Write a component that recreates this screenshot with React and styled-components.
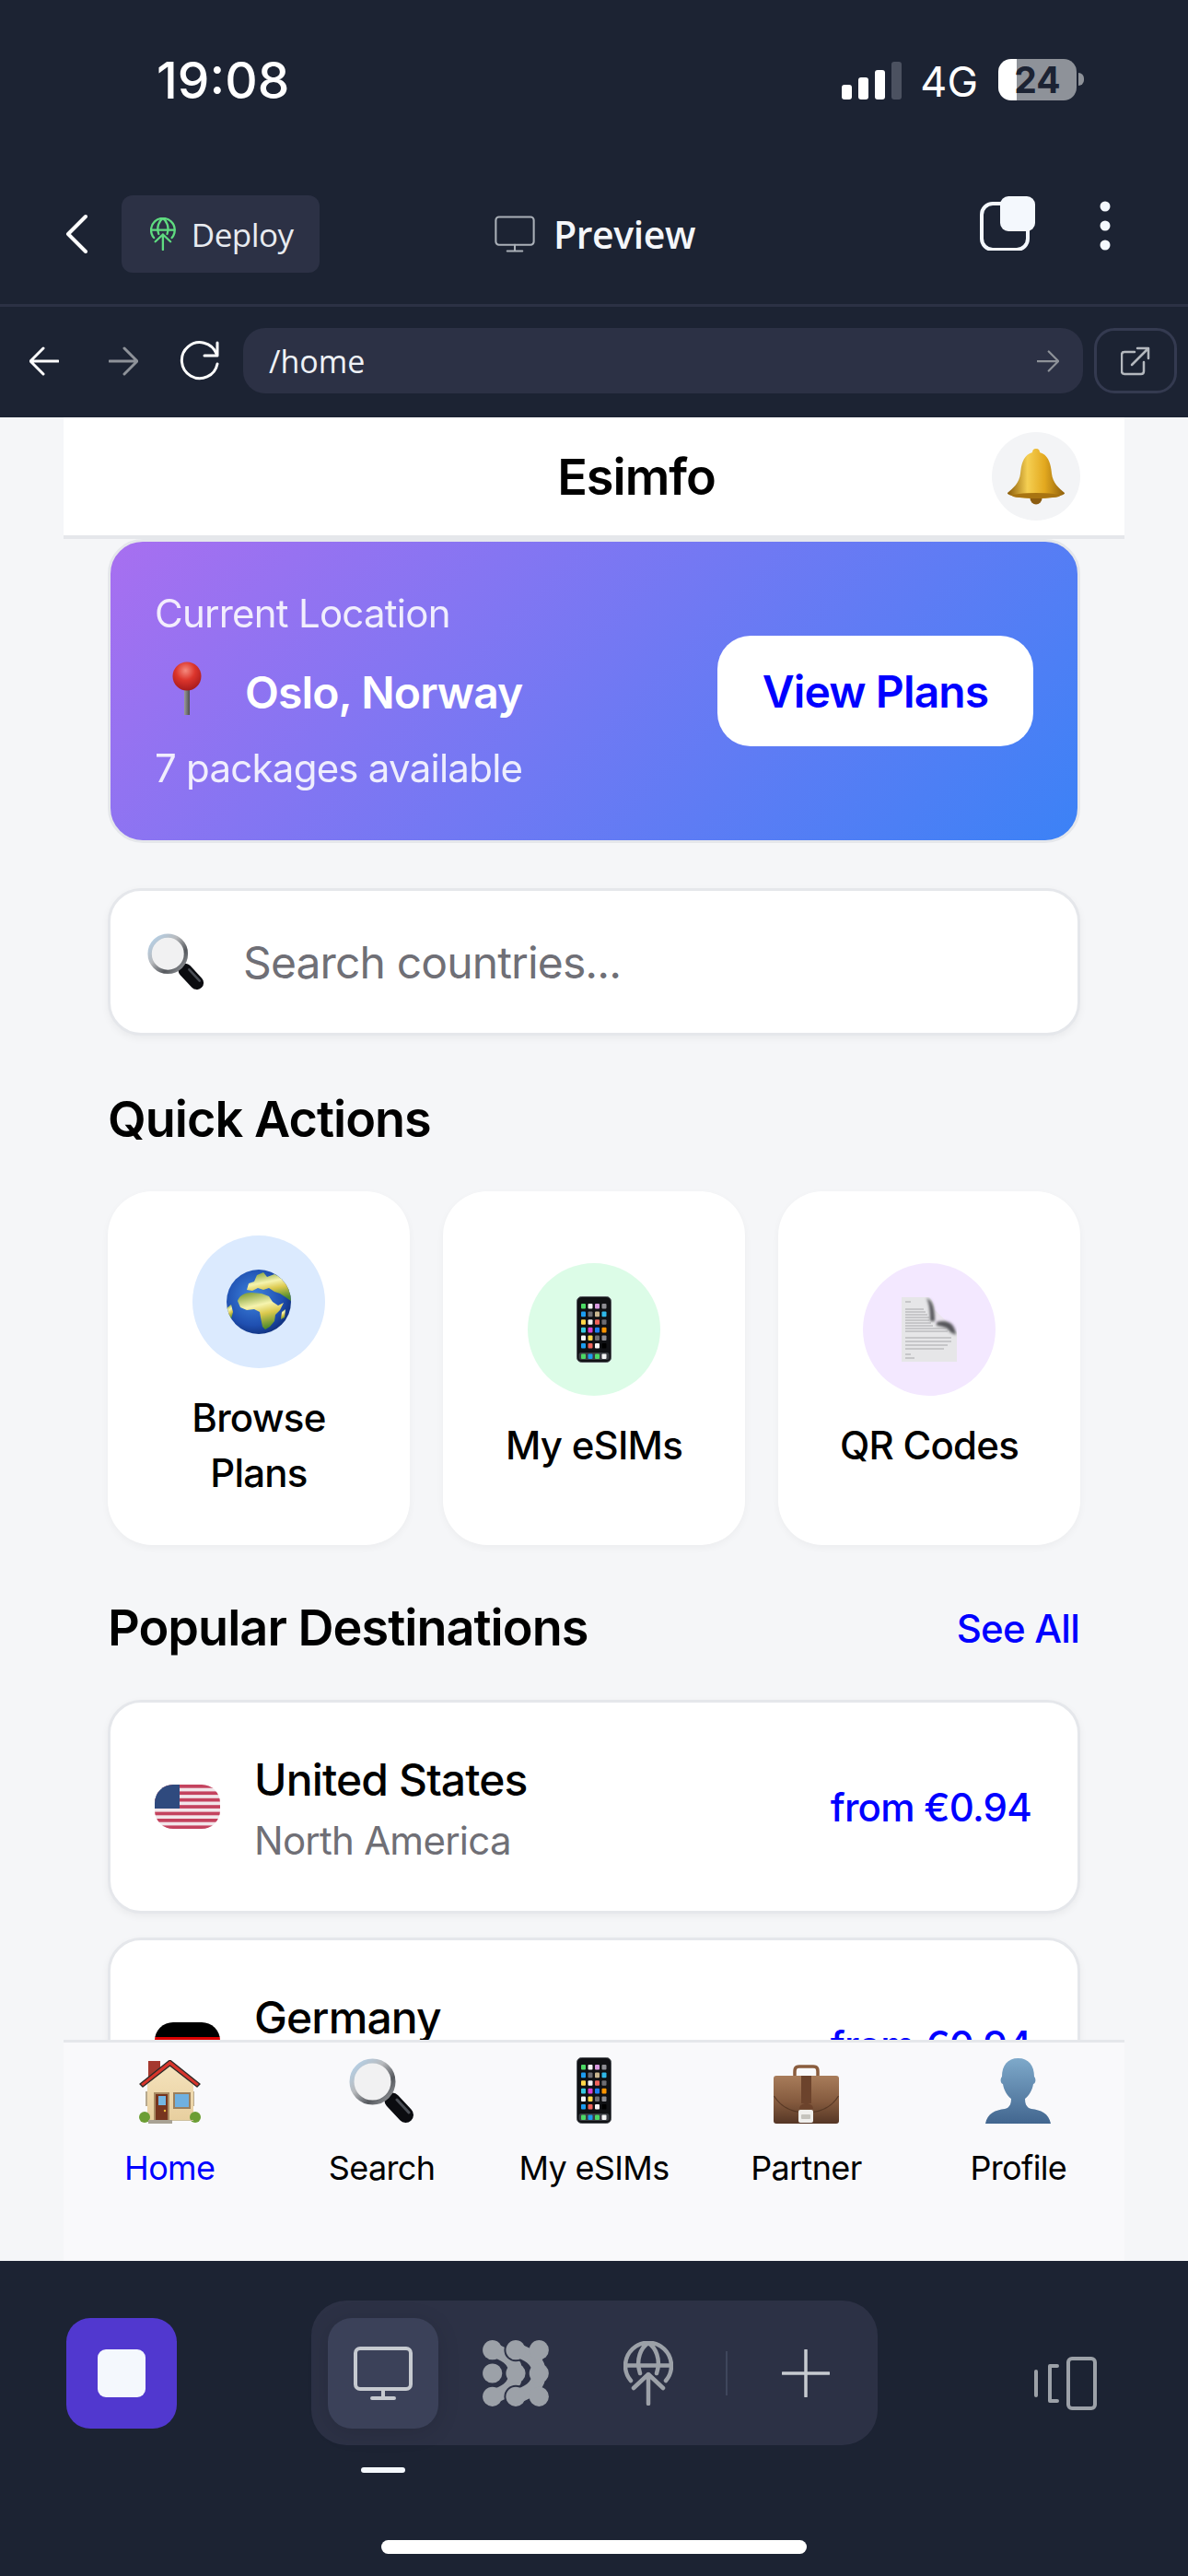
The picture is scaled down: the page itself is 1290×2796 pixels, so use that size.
import React from "react";
import styled, { createGlobalStyle } from "styled-components";

const GlobalStyle = createGlobalStyle`
  html, body { margin: 0; padding: 0; background: #1c2333; }
  * { box-sizing: border-box; }
  body { font-family: Inter, "Liberation Sans", sans-serif; }
`;

const Screen = styled.div`
  width: 1290px;
  height: 2796px;
  display: flex;
  flex-direction: column;
  background: #1c2333;
  overflow: hidden;
`;

/* status bar */
const StatusBar = styled.div`
  height: 190px;
  display: flex;
  justify-content: space-between;
  padding: 52px 113px 0 170px;
  color: #fff;
`;
const Clock = styled.div`
  font-size: 55px;
  line-height: 70px;
  font-weight: 500;
`;
const StatusRight = styled.div`
  display: flex;
  align-items: flex-start;
  padding-top: 12px;
`;
const Signal = styled.div`
  display: flex;
  align-items: flex-end;
  gap: 7px;
  height: 42px;
  margin-top: 2px;
`;
const SignalBar = styled.span`
  width: 11px;
  height: ${(p) => p.$h}px;
  border-radius: 3px;
  background: ${(p) => (p.$off ? "#4b5160" : "#fff")};
`;
const NetLabel = styled.div`
  font-size: 45px;
  line-height: 46px;
  margin: 2px 22px 0 20px;
`;
const Battery = styled.div`
  width: 85px;
  height: 45px;
  border-radius: 14px;
  overflow: hidden;
  background: linear-gradient(90deg, #fff 0 20px, #8e9299 20px);
  color: #1c2333;
  font-size: 39px;
  font-weight: 700;
  line-height: 45px;
  text-align: center;
`;
const BatteryNub = styled.span`
  width: 6px;
  height: 14px;
  margin: 15px 0 0 2px;
  border-radius: 0 6px 6px 0;
  background: #8e9299;
`;

/* top bar */
const TopBar = styled.div`
  height: 140px;
  display: flex;
  align-items: flex-start;
  padding: 22px 0 0 70px;
`;
const Chevron = styled.svg`
  width: 28px;
  height: 44px;
  margin: 20px 34px 0 0;
`;
const DeployButton = styled.div`
  width: 215px;
  height: 84px;
  display: flex;
  align-items: center;
  gap: 17px;
  padding-left: 31px;
  border-radius: 12px;
  background: #2c3145;
  color: #e8ebf0;
  font-family: "Open Sans", sans-serif;
  font-size: 35px;
  letter-spacing: -0.5px;
`;
const PreviewTab = styled.div`
  display: flex;
  align-items: center;
  gap: 20px;
  margin: 0 0 0 190px;
  height: 84px;
  color: #f4f6fa;
  font-family: "Open Sans", sans-serif;
  font-size: 41px;
  font-weight: 600;
  letter-spacing: -0.4px;
`;
const TopActions = styled.div`
  margin-left: auto;
  display: flex;
  align-items: flex-start;
  padding-right: 84px;
`;
const MenuDots = styled.svg`
  width: 12px;
  height: 54px;
  margin: 6px 0 0 70px;
`;
const Divider = styled.div`
  height: 3px;
  background: #2c3145;
`;

/* url bar */
const UrlRow = styled.div`
  height: 120px;
  display: flex;
  align-items: flex-start;
  padding: 23px 12px 0 32px;
`;
const NavGlyphs = styled.div`
  display: flex;
  align-items: center;
  height: 71px;
  width: 232px;
  gap: 54px;
`;
const RefreshIcon = styled.svg`
  width: 44px;
  height: 44px;
  margin-left: -9px;
`;
const UrlField = styled.div`
  flex: 1;
  height: 71px;
  display: flex;
  align-items: center;
  justify-content: space-between;
  padding: 0 26px 0 28px;
  border-radius: 24px;
  background: #2c3145;
  color: #eef1f6;
  font-family: "Open Sans", sans-serif;
  font-size: 34px;
`;
const OpenButton = styled.div`
  width: 90px;
  height: 71px;
  margin-left: 12px;
  display: flex;
  align-items: center;
  justify-content: center;
  border: 3px solid #343a50;
  border-radius: 22px;
`;

/* page */
const Page = styled.div`
  height: 2001px;
  background: #f5f6f8;
  display: flex;
  justify-content: center;
  & * {
    letter-spacing: -0.018em;
  }
`;
const AppColumn = styled.div`
  width: 1152px;
  display: flex;
  flex-direction: column;
`;
const AppHeader = styled.div`
  height: 132px;
  flex: none;
  display: flex;
  align-items: center;
  justify-content: flex-end;
  gap: 300px;
  padding-right: 48px;
  background: #fff;
  border-bottom: 4px solid #e5e7eb;
`;
const AppTitle = styled.div`
  font-size: 54px;
  font-weight: 600;
  color: #000;
`;
const BellCircle = styled.div`
  width: 96px;
  height: 96px;
  border-radius: 50%;
  background: #f3f4f6;
  display: flex;
  align-items: center;
  justify-content: center;
`;
const Scroll = styled.div`
  flex: 1;
  overflow: hidden;
  padding: 0 48px;
`;
const Hero = styled.div`
  height: 330px;
  display: flex;
  align-items: center;
  justify-content: space-between;
  padding: 0 48px;
  border: 3px solid #e5e7eb;
  border-radius: 38px;
  background: linear-gradient(135deg, #a86ff0 0%, #3b82f6 100%) border-box;
  color: #fff;
`;
const HeroText = styled.div`
  display: flex;
  flex-direction: column;
`;
const HeroSmall = styled.div`
  font-size: 42px;
  line-height: 60px;
  opacity: 0.88;
`;
const HeroPlace = styled.div`
  display: flex;
  align-items: center;
  gap: 28px;
  height: 84px;
  margin: 13px 0 11px;
  font-size: 48px;
  font-weight: 600;
`;
const ViewPlans = styled.div`
  width: 343px;
  height: 120px;
  border-radius: 36px;
  background: #fff;
  color: #0000ff;
  font-size: 48px;
  font-weight: 600;
  display: flex;
  align-items: center;
  justify-content: center;
`;
const SearchBox = styled.div`
  height: 160px;
  margin-top: 49px;
  display: flex;
  align-items: center;
  gap: 42px;
  padding-left: 40px;
  background: #fff;
  border: 3px solid #e5e7eb;
  border-radius: 36px;
  box-shadow: 0 3px 8px rgba(0, 0, 0, 0.05);
  color: #6f6f76;
  font-size: 48px;
`;
const SectionTitle = styled.div`
  font-size: 54px;
  font-weight: 600;
  line-height: 72px;
  color: #000;
`;
const QuickTitle = styled(SectionTitle)`
  margin-top: 55px;
`;
const QuickGrid = styled.div`
  display: grid;
  grid-template-columns: repeat(3, 328px);
  gap: 36px;
  margin-top: 42px;
`;
const QuickCard = styled.div`
  height: 384px;
  display: flex;
  flex-direction: column;
  align-items: center;
  justify-content: center;
  gap: 24px;
  border-radius: 48px;
  background: #fff;
  box-shadow: 0 3px 8px rgba(0, 0, 0, 0.04);
`;
const QuickIcon = styled.div`
  width: 144px;
  height: 144px;
  border-radius: 50%;
  background: ${(p) => p.$bg};
  display: flex;
  align-items: center;
  justify-content: center;
`;
const QuickLabel = styled.div`
  width: 220px;
  font-size: 42px;
  line-height: 60px;
  text-align: center;
  color: #000;
  font-weight: 500;
`;
const SectionRow = styled.div`
  display: flex;
  align-items: center;
  justify-content: space-between;
  margin-top: 54px;
`;
const SeeAll = styled.div`
  font-size: 42px;
  font-weight: 500;
  color: #0000ff;
  padding-right: 1px;
`;
const DestList = styled.div`
  display: flex;
  flex-direction: column;
  gap: 26px;
  margin-top: 42px;
`;
const DestCard = styled.div`
  height: 232px;
  flex: none;
  display: flex;
  align-items: center;
  padding: 0 50px 0 48px;
  background: #fff;
  border: 3px solid #e5e7eb;
  border-radius: 36px;
  box-shadow: 0 3px 8px rgba(0, 0, 0, 0.05);
`;
const DestText = styled.div`
  flex: 1;
  margin-left: 37px;
  padding-top: 6px;
  display: flex;
  flex-direction: column;
`;
const DestName = styled.div`
  font-size: 48px;
  font-weight: 500;
  line-height: 68px;
  color: #000;
`;
const DestRegion = styled.div`
  font-size: 42px;
  line-height: 64px;
  color: #6f6f76;
`;
const Price = styled.div`
  font-size: 42px;
  font-weight: 500;
  color: #0000ff;
`;

/* bottom tabs */
const TabBar = styled.div`
  height: 240px;
  flex: none;
  display: grid;
  grid-template-columns: repeat(5, 1fr);
  padding-top: 16px;
  background: #f9f9fb;
  border-top: 3px solid #e5e7eb;
`;
const Tab = styled.div`
  display: flex;
  flex-direction: column;
  align-items: center;
  gap: 26px;
  font-size: 36px;
  line-height: 44px;
  color: ${(p) => (p.$active ? "#0000ff" : "#000")};
`;
const TabIcon = styled.div`
  height: 72px;
  display: flex;
  align-items: flex-end;
`;

/* footer */
const Footer = styled.div`
  height: 342px;
  position: relative;
  display: flex;
  align-items: flex-start;
  padding: 43px 98px 0 72px;
`;
const StopButton = styled.div`
  width: 120px;
  height: 120px;
  margin-top: 19px;
  border-radius: 26px;
  background: #5138cf;
  display: flex;
  align-items: center;
  justify-content: center;
`;
const StopSquare = styled.div`
  width: 52px;
  height: 52px;
  border-radius: 9px;
  background: #f4f8fd;
`;
const ToolPill = styled.div`
  width: 615px;
  height: 157px;
  margin-left: 146px;
  flex: none;
  display: flex;
  align-items: center;
  padding-left: 18px;
  border-radius: 38px;
  background: #2c3145;
`;
const ToolActive = styled.div`
  width: 120px;
  height: 120px;
  flex: none;
  border-radius: 26px;
  background: #3b4159;
  box-shadow: 0 4px 24px rgba(0, 0, 0, 0.12);
  display: flex;
  align-items: center;
  justify-content: center;
`;
const ToolSlot = styled.div`
  width: ${(p) => p.$w}px;
  flex: none;
  display: flex;
  align-items: center;
  justify-content: center;
`;
const ToolRule = styled.div`
  width: 2px;
  height: 48px;
  flex: none;
  margin-left: 24px;
  background: #3f465c;
`;
const SideIcon = styled.svg`
  width: 70px;
  height: 60px;
  margin: 60px 0 0 auto;
`;
const ActiveMark = styled.div`
  position: absolute;
  left: 392px;
  top: 224px;
  width: 48px;
  height: 6px;
  border-radius: 3px;
  background: #f4f8fd;
`;
const HomeBar = styled.div`
  position: absolute;
  left: 414px;
  top: 303px;
  width: 462px;
  height: 15px;
  border-radius: 8px;
  background: #fff;
`;

/* line icons */
const GlobeUp = ({ size, color, sw }) => (
  <svg width={(size * 54) / 70} height={size} viewBox="0 0 54 70" fill="none" stroke={color} strokeWidth={sw} strokeLinecap="round" strokeLinejoin="round">
    <path d="M8 43 A25 25 0 1 1 46 43" />
    <path d="M18 35 C13 20 19 7 27 2 C35 7 41 20 36 35" />
    <path d="M3 26.5 H51" />
    <path d="M27 68 V36 M11 51 L27 36 L43 51" />
  </svg>
);

const Monitor = ({ w, h, color, sw }) => (
  <svg width={w} height={h} viewBox="0 0 64 58" fill="none" stroke={color} strokeWidth={sw} strokeLinecap="round" strokeLinejoin="round">
    <rect x="2" y="2" width="60" height="44" rx="5" />
    <path d="M32 46 V55 M20 56 H44" />
  </svg>
);

const Arrow = ({ size, color, dir, sw = 3 }) => (
  <svg width={size} height={size} viewBox="0 0 32 32" fill="none" stroke={color} strokeWidth={sw} strokeLinecap="round" strokeLinejoin="round">
    {dir === "left" ? <path d="M31 16 H2 M15 2 L1 16 L15 30" /> : <path d="M1 16 H30 M17 2 L31 16 L17 30" />}
  </svg>
);

const dotGray = "#9ca1a8";
const pillBg = "#2c3145";
const Dot = ({ x, y, halo }) => <circle cx={x} cy={y} r={halo ? 12.6 : 10.6} fill={halo ? pillBg : dotGray} />;
const ribbonA = "M10.7 10.7 C22 14 36 20 36 36 C36 52 22 58 10.7 61.3";
const ribbonB = "M36 10.7 C47.3 14 61.3 20 61.3 36 C61.3 52 47.3 58 36 61.3";

const AgentDots = () => (
  <svg width="72" height="72" viewBox="0 0 72 72" fill="none" strokeLinecap="round">
    <path d={ribbonA} stroke={dotGray} strokeWidth="15" />
    <Dot x={10.7} y={10.7} />
    <Dot x={36} y={36} />
    <Dot x={10.7} y={61.3} />
    <Dot x={10.7} y={36} />
    <path d={ribbonB} stroke={pillBg} strokeWidth="20" />
    <Dot x={36} y={10.7} halo />
    <Dot x={61.3} y={36} halo />
    <Dot x={36} y={61.3} halo />
    <path d={ribbonB} stroke={dotGray} strokeWidth="15" />
    <Dot x={36} y={10.7} />
    <Dot x={61.3} y={36} />
    <Dot x={36} y={61.3} />
    <Dot x={61.3} y={10.7} />
    <Dot x={61.3} y={61.3} />
  </svg>
);

/* emoji drawings */
const Bell = () => (
  <svg width="64" height="62" viewBox="0 0 64 62">
    <defs>
      <linearGradient id="bellGold" x1="0" x2="1">
        <stop offset="0" stopColor="#8a5a08" />
        <stop offset="0.35" stopColor="#f5cf52" />
        <stop offset="0.65" stopColor="#e3a91f" />
        <stop offset="1" stopColor="#8f5f0c" />
      </linearGradient>
    </defs>
    <circle cx="32" cy="55" r="6.5" fill="#8c5c10" />
    <path d="M32 1 C35 1 36 3 36 5 C46 8 48 18 49 28 C50 38 57 44 63 49 C64 52 50 55 32 55 C14 55 0 52 1 49 C7 44 14 38 15 28 C16 18 18 8 28 5 C28 3 29 1 32 1 Z" fill="url(#bellGold)" />
    <ellipse cx="32" cy="52" rx="26" ry="3" fill="#a87412" />
  </svg>
);

const Pin = () => (
  <svg width="70" height="66" viewBox="0 0 70 66">
    <defs>
      <radialGradient id="pinHead" cx="0.45" cy="0.3" r="0.75">
        <stop offset="0" stopColor="#f58a7e" />
        <stop offset="0.45" stopColor="#dc352c" />
        <stop offset="1" stopColor="#a0171a" />
      </radialGradient>
      <linearGradient id="pinNeedle" x1="0" x2="1">
        <stop offset="0" stopColor="#9b9b9b" />
        <stop offset="1" stopColor="#4d4d4d" />
      </linearGradient>
    </defs>
    <rect x="32" y="28" width="6" height="30" fill="url(#pinNeedle)" />
    <circle cx="35" cy="16" r="15.5" fill="url(#pinHead)" />
  </svg>
);

const Magnifier = ({ size }) => (
  <svg width={size} height={size} viewBox="0 0 71 71" fill="none">
    <defs>
      <linearGradient id="magRing" x1="0" y1="0" x2="1" y2="1">
        <stop offset="0" stopColor="#b5d4ee" />
        <stop offset="0.4" stopColor="#b8babd" />
        <stop offset="0.7" stopColor="#55585d" />
        <stop offset="1" stopColor="#9fa2a6" />
      </linearGradient>
    </defs>
    <path d="M47 46 L61.5 61.5" stroke="#0b0c10" strokeWidth="17" strokeLinecap="round" />
    <path d="M52 45 L65 59" stroke="#4a4e55" strokeWidth="3" strokeLinecap="round" />
    <circle cx="25.5" cy="25.5" r="22.5" fill="#f1f1f2" stroke="url(#magRing)" strokeWidth="5" />
  </svg>
);

const appColors = [
  ["#4cd964", "#f4f4f4", "#d99ae0", "#8e8e93"],
  ["#1c9cf0", "#6d6d72", "#c9b68f", "#2fb8e8"],
  ["#ffd84a", "#f4f4f4", "#f0625a", "#6d6d72"],
  ["#35c8e0", "#d63fd0", "#1c7df0", "#ff9500"],
  ["#f4f4f4", "#ffd84a", "#6d6d72", "#8e8e93"],
  ["#1c9cf0", "#f0625a", "#f4f4f4", "#000"],
];
const dockColors = ["#4cd964", "#1c9cf0", "#4cd964", "#f4f4f4"];

const Phone = ({ h }) => (
  <svg width={(h * 38) / 72} height={h} viewBox="0 0 38 72">
    <rect x="0.5" y="0.5" width="37" height="71" rx="5" fill="#101114" stroke="#55585e" />
    {appColors.map((row, r) =>
      row.map((c, i) => <rect key={`${r}-${i}`} x={5 + i * 7.5} y={8 + r * 8.6} width="5" height="5.6" rx="1" fill={c} />)
    )}
    <rect x="2.5" y="61" width="33" height="8" rx="2.5" fill="#3a3d42" />
    {dockColors.map((c, i) => (
      <rect key={c + i} x={5 + i * 7.5} y="62.5" width="5" height="5.4" rx="1" fill={c} />
    ))}
  </svg>
);

const Earth = () => (
  <svg width="70" height="70" viewBox="0 0 70 70">
    <defs>
      <radialGradient id="earthSea" cx="0.42" cy="0.42" r="0.62">
        <stop offset="0" stopColor="#3f86e0" />
        <stop offset="0.72" stopColor="#1f4fb0" />
        <stop offset="1" stopColor="#10307c" />
      </radialGradient>
      <linearGradient id="earthLand" x1="0.2" y1="0" x2="0.5" y2="1">
        <stop offset="0" stopColor="#7f9e3a" />
        <stop offset="0.38" stopColor="#f6f4ae" />
        <stop offset="0.62" stopColor="#dcc94e" />
        <stop offset="1" stopColor="#4e8a2c" />
      </linearGradient>
      <clipPath id="earthClip">
        <circle cx="35" cy="35" r="35" />
      </clipPath>
    </defs>
    <circle cx="35" cy="35" r="35" fill="url(#earthSea)" />
    <g clipPath="url(#earthClip)" fill="url(#earthLand)">
      <path d="M22 22 L24 15 L30 13 L33 6 L40 3 L44 8 L52 5 L62 10 L70 22 V34 L64 30 L58 26 L52 24 L46 20 L40 22 L34 20 L28 23 Z" />
      <path d="M12 34 C14 28 20 25 27 25 L38 26 L46 29 L50 35 L56 39 L62 36 L58 44 L53 49 L52 56 L47 62 L42 65 L39 62 L37 52 L36 46 L30 43 L22 44 L15 41 Z" />
      <path d="M0 42 L5 38 L7 46 L5 54 L0 52 Z" />
      <path d="M60 46 L64 43 L63 52 L59 54 Z" />
    </g>
  </svg>
);

const DocPage = () => (
  <svg width="60" height="70" viewBox="0 0 60 70">
    <defs>
      <filter id="docBlur" x="-30%" y="-30%" width="160%" height="160%">
        <feGaussianBlur stdDeviation="1.6" />
      </filter>
    </defs>
    <path d="M0 0 H28 C32 0 35 6 36 14 L60 38 V70 H0 Z" fill="#e6e6e8" />
    <path d="M36 14 L50 27 C44 26 38 27 36 30 Z" fill="#ece6f0" />
    <g filter="url(#docBlur)" fill="#55555a">
      <path d="M27 1 C33 3 36 10 36 26 L31 26 C31 14 30 6 27 1 Z" />
      <path d="M38 27 C50 24 58 28 59 41 L53 38 C50 33 44 31 38 31 Z" />
    </g>
    <path d="M4 5 H10 M4 13 H24 M4 16 H26 M4 19 H28 M4 22 H30 M4 25 H30 M4 28 H32 M4 31 H34 M4 34 H48 M4 37 H50 M4 44 H54 M4 48 H54 M4 52 H50 M4 56 H46 M4 62 H10 M4 66 H14" stroke="#a0a0a4" strokeWidth="0.9" />
  </svg>
);

const House = () => (
  <svg width="67" height="69" viewBox="0 0 67 69">
    <defs>
      <linearGradient id="siding" x1="0" y1="0" x2="0" y2="1">
        <stop offset="0" stopColor="#f5e3bd" />
        <stop offset="1" stopColor="#e8cf9f" />
      </linearGradient>
    </defs>
    <rect x="10" y="1" width="13" height="22" fill="#a5392f" />
    <rect x="7" y="34" width="3" height="16" fill="#b7a98f" />
    <rect x="57" y="34" width="3" height="16" fill="#b7a98f" />
    <path d="M33.5 4 L59 26 V65 H9 V26 Z" fill="url(#siding)" />
    <path d="M1 26 L33.5 0 L66 26 L63 29 L33.5 6 L4 29 Z" fill="#d8352b" stroke="#2e2a28" strokeWidth="1.4" strokeLinejoin="round" />
    <rect x="16" y="35" width="17" height="30" fill="#a98b63" />
    <rect x="18" y="37" width="13" height="28" fill="#76351f" />
    <rect x="21" y="39" width="8" height="10" fill="#74b6e2" />
    <circle cx="28" cy="55" r="1.2" fill="#f0c040" />
    <rect x="37" y="35" width="19" height="18" fill="#9b7f5c" />
    <rect x="39" y="37" width="15" height="14" fill="#6fb0e0" />
    <ellipse cx="6" cy="62" rx="6" ry="6" fill="#6c9e34" />
    <ellipse cx="61" cy="62" rx="6" ry="6" fill="#6c9e34" />
    <rect x="10" y="65" width="26" height="4" fill="#a9a294" />
    <rect x="36" y="65" width="23" height="1" fill="#cdbf9d" />
  </svg>
);

const Briefcase = () => (
  <svg width="71" height="64" viewBox="0 0 71 64" fill="none">
    <defs>
      <linearGradient id="leather" x1="0" y1="0" x2="0" y2="1">
        <stop offset="0" stopColor="#a87c5a" />
        <stop offset="0.55" stopColor="#845a3e" />
        <stop offset="1" stopColor="#553625" />
      </linearGradient>
    </defs>
    <path d="M23 13 C23 6 22 2 28 2 H43 C49 2 48 6 48 13" stroke="#8a5d3e" strokeWidth="3.5" />
    <path d="M3 12 H68 C70 12 71 13 71 15 V61 C71 63 70 64 68 64 H3 C1 64 0 63 0 61 V15 C0 13 1 12 3 12 Z" fill="url(#leather)" />
    <path d="M0.5 34 C8 46 20 52 35.5 52 C51 52 63 46 70.5 34" stroke="#573825" strokeWidth="1.2" />
    <path d="M30 12 H41 V42 H30 Z" fill="#6c432c" />
    <path d="M28 48 C28 40 43 40 43 48 Z" fill="#6c432c" />
    <rect x="27" y="49" width="16" height="14" rx="2" fill="#f0efec" />
    <rect x="30" y="54" width="10" height="5" rx="1" fill="#c6c4bd" />
  </svg>
);

const Bust = () => (
  <svg width="71" height="71" viewBox="0 0 71 71">
    <defs>
      <linearGradient id="bustBlue" x1="0" y1="0" x2="0" y2="1">
        <stop offset="0" stopColor="#7ea9ca" />
        <stop offset="1" stopColor="#42668f" />
      </linearGradient>
    </defs>
    <path d="M35.5 0 C47 0 53 8 53 20 C55 22 55 27 52 28 C51 35 47 41 43 44 C43 50 45 54 50 55 C60 56 69 60 71 71 H0 C2 60 11 56 21 55 C26 54 28 50 28 44 C24 41 20 35 19 28 C16 27 16 22 18 20 C18 8 24 0 35.5 0 Z" fill="url(#bustBlue)" />
  </svg>
);

const FlagClip = styled.div`
  width: 71px;
  height: 48px;
  flex: none;
  border-radius: 20px;
  overflow: hidden;
`;
const UsFlag = () => (
  <FlagClip>
    <svg width="71" height="48" viewBox="0 0 71 48">
      <rect width="71" height="48" fill="#f2e6ea" />
      {[0, 1, 2, 3, 4, 5, 6].map((i) => (
        <rect key={i} y={i * 7.4} width="71" height="3.7" fill="#c4425e" />
      ))}
      <rect width="27" height="26" fill="#2f4a7e" />
    </svg>
  </FlagClip>
);
const DeFlag = () => (
  <FlagClip>
    <svg width="71" height="48" viewBox="0 0 71 48">
      <rect width="71" height="16" fill="#000" />
      <rect y="16" width="71" height="16" fill="#dd0000" />
      <rect y="32" width="71" height="16" fill="#ffce00" />
    </svg>
  </FlagClip>
);

const destinations = [
  { name: "United States", region: "North America", price: "from €0.94", flag: <UsFlag /> },
  { name: "Germany", region: "Europe", price: "from €0.94", flag: <DeFlag /> },
];

const tabs = [
  { label: "Home", icon: <House />, active: true },
  { label: "Search", icon: <Magnifier size={71} /> },
  { label: "My eSIMs", icon: <Phone h={72} /> },
  { label: "Partner", icon: <Briefcase /> },
  { label: "Profile", icon: <Bust /> },
];

const App = () => (
  <Screen>
    <GlobalStyle />
    <StatusBar>
      <Clock>19:08</Clock>
      <StatusRight>
        <Signal>
          <SignalBar $h={16} />
          <SignalBar $h={24} />
          <SignalBar $h={32} />
          <SignalBar $h={41} $off />
        </Signal>
        <NetLabel>4G</NetLabel>
        <Battery>24</Battery>
        <BatteryNub />
      </StatusRight>
    </StatusBar>

    <TopBar>
      <Chevron viewBox="0 0 28 44" fill="none" stroke="#fff" strokeWidth="4" strokeLinecap="round" strokeLinejoin="round">
        <path d="M23 3 L4 22 L23 41" />
      </Chevron>
      <DeployButton>
        <GlobeUp size={36} color="#5fdc80" sw={4.5} />
        Deploy
      </DeployButton>
      <PreviewTab>
        <Monitor w={44} h={40} color="#aab0b8" sw={3} />
        Preview
      </PreviewTab>
      <TopActions>
        <svg width="60" height="60" viewBox="0 0 60 60" fill="none">
          <rect x="2" y="9" width="50" height="50" rx="12" stroke="#f4f8fd" strokeWidth="4" />
          <rect x="22" y="1" width="38" height="38" rx="9" fill="#f4f8fd" />
        </svg>
        <MenuDots viewBox="0 0 12 54">
          <circle cx="6" cy="6" r="5.5" fill="#f4f8fd" />
          <circle cx="6" cy="27" r="5.5" fill="#f4f8fd" />
          <circle cx="6" cy="48" r="5.5" fill="#f4f8fd" />
        </MenuDots>
      </TopActions>
    </TopBar>
    <Divider />

    <UrlRow>
      <NavGlyphs>
        <Arrow size={32} color="#fff" dir="left" />
        <Arrow size={32} color="#8e9299" dir="right" />
        <RefreshIcon viewBox="0 0 44 44" fill="none" stroke="#fff" strokeWidth="3" strokeLinecap="round" strokeLinejoin="round">
          <path d="M40 14 A19.5 19.5 0 1 0 41 25" />
          <path d="M41 2 V16 H27" />
        </RefreshIcon>
      </NavGlyphs>
      <UrlField>
        /home
        <Arrow size={24} color="#8e9299" dir="right" sw={3} />
      </UrlField>
      <OpenButton>
        <svg width="32" height="32" viewBox="0 0 32 32" fill="none" stroke="#b4b8be" strokeWidth="2.5" strokeLinecap="round" strokeLinejoin="round">
          <path d="M15 6 H4 C2 6 1 7 1 9 V27 C1 29 2 30 4 30 H22 C24 30 25 29 25 27 V17" />
          <path d="M12 20 L30 2 M18 2 H30 V13" />
        </svg>
      </OpenButton>
    </UrlRow>

    <Page>
      <AppColumn>
        <AppHeader>
          <AppTitle>Esimfo</AppTitle>
          <BellCircle>
            <Bell />
          </BellCircle>
        </AppHeader>
        <Scroll>
          <Hero>
            <HeroText>
              <HeroSmall>Current Location</HeroSmall>
              <HeroPlace>
                <Pin />
                Oslo, Norway
              </HeroPlace>
              <HeroSmall>7 packages available</HeroSmall>
            </HeroText>
            <ViewPlans>View Plans</ViewPlans>
          </Hero>
          <SearchBox>
            <Magnifier size={62} />
            Search countries...
          </SearchBox>
          <QuickTitle>Quick Actions</QuickTitle>
          <QuickGrid>
            <QuickCard>
              <QuickIcon $bg="#dbeafe">
                <Earth />
              </QuickIcon>
              <QuickLabel>Browse Plans</QuickLabel>
            </QuickCard>
            <QuickCard>
              <QuickIcon $bg="#dcfce7">
                <Phone h={72} />
              </QuickIcon>
              <QuickLabel>My eSIMs</QuickLabel>
            </QuickCard>
            <QuickCard>
              <QuickIcon $bg="#f3e8ff">
                <DocPage />
              </QuickIcon>
              <QuickLabel>QR Codes</QuickLabel>
            </QuickCard>
          </QuickGrid>
          <SectionRow>
            <SectionTitle>Popular Destinations</SectionTitle>
            <SeeAll>See All</SeeAll>
          </SectionRow>
          <DestList>
            {destinations.map((d) => (
              <DestCard key={d.name}>
                {d.flag}
                <DestText>
                  <DestName>{d.name}</DestName>
                  <DestRegion>{d.region}</DestRegion>
                </DestText>
                <Price>{d.price}</Price>
              </DestCard>
            ))}
          </DestList>
        </Scroll>
        <TabBar>
          {tabs.map((t) => (
            <Tab key={t.label} $active={t.active}>
              <TabIcon>{t.icon}</TabIcon>
              {t.label}
            </Tab>
          ))}
        </TabBar>
      </AppColumn>
    </Page>

    <Footer>
      <StopButton>
        <StopSquare />
      </StopButton>
      <ToolPill>
        <ToolActive>
          <Monitor w={64} h={58} color="#c6cad0" sw={4} />
        </ToolActive>
        <ToolSlot $w={168}>
          <AgentDots />
        </ToolSlot>
        <ToolSlot $w={120}>
          <GlobeUp size={70} color="#9ca1a8" sw={4.5} />
        </ToolSlot>
        <ToolRule />
        <ToolSlot $w={170}>
          <svg width="52" height="52" viewBox="0 0 52 52" stroke="#c6cad0" strokeWidth="3.5" strokeLinecap="round">
            <path d="M26 1 V51 M1 26 H51" />
          </svg>
        </ToolSlot>
      </ToolPill>
      <SideIcon viewBox="0 0 70 60" fill="none" stroke="#9ca1a8" strokeWidth="4" strokeLinecap="round" strokeLinejoin="round">
        <rect x="38" y="3" width="29" height="54" rx="4" />
        <path d="M26 11 H18 V49 H26" />
        <path d="M3 17 V43" />
      </SideIcon>
      <ActiveMark />
      <HomeBar />
    </Footer>
  </Screen>
);

export default App;
